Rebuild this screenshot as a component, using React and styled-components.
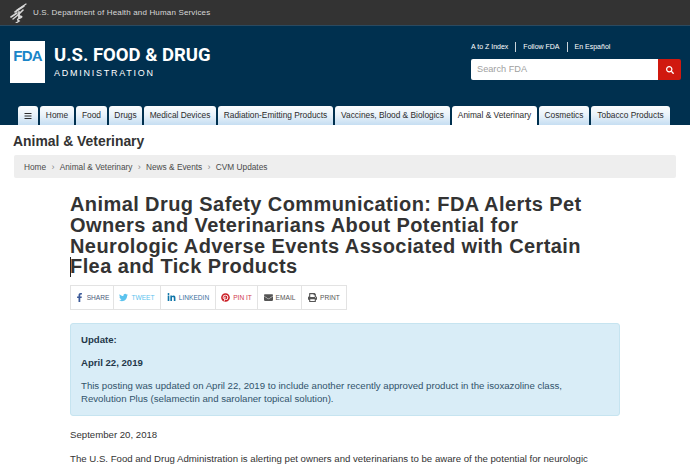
import React from "react";
import styled, { createGlobalStyle } from "styled-components";
import { FaFacebookF, FaTwitter, FaLinkedinIn, FaPinterest, FaEnvelope, FaPrint, FaBars, FaSearch } from "react-icons/fa";

const Global = createGlobalStyle`
  html, body { margin: 0; padding: 0; background: #fff; }
  body { width: 690px; height: 465px; overflow: hidden; font-family: "Liberation Sans", Arial, sans-serif; color: #333; }
  * { box-sizing: border-box; }
`;
const Page = styled.div`width: 690px; height: 465px; overflow: hidden;`;
const TopBar = styled.div`
  height: 26px; background: #333; border-bottom: 1px solid #2b4a60;
  display: flex; align-items: center; padding-left: 10px; gap: 6px;
`;
const TopText = styled.span`font-size: 8px; letter-spacing: 0.16px; color: #d8d8d8; padding-bottom: 1px;`;
const Masthead = styled.header`height: 99px; background: #00304f; display: flex; flex-direction: column;`;
const BrandRow = styled.div`height: 80px; padding: 15px 9px 0 10px; display: flex; justify-content: space-between;`;
const Brand = styled.div`display: flex; gap: 9px; align-items: flex-start;`;
const LogoBox = styled.div`
  width: 35px; height: 42px; background: #fff; display: flex; align-items: center; justify-content: center;
  padding-bottom: 13px; color: #1a85c8; font-size: 15px; font-weight: 700; letter-spacing: -0.8px;
`;
const BrandText = styled.div`display: flex; flex-direction: column; padding-top: 4px;`;
const BrandTitle = styled.div`font-family: Roboto, "Liberation Sans", sans-serif; font-size: 18.5px; line-height: 20px; font-weight: 700; color: #fff; letter-spacing: 0; white-space: nowrap;`;
const BrandSub = styled.div`font-size: 9px; line-height: 11px; margin-top: 3px; color: #fff; letter-spacing: 1.75px;`;
const Tools = styled.div`width: 210px; display: flex; flex-direction: column;`;
const ToolLinks = styled.div`display: flex; align-items: center; height: 10px; margin-top: 1px; font-size: 7px; color: #fff;`;
const ToolLink = styled.span`
  padding: 0 7px; border-left: 1px solid #c9d3da; line-height: 10px;
  &:first-child { border-left: 0; padding-left: 0; }
`;
const SearchBox = styled.div`display: flex; height: 21px; margin-top: 7px; border-radius: 2px; overflow: hidden;`;
const SearchField = styled.div`flex: 1; background: #fff; color: #a0a0a0; font-size: 9.2px; line-height: 21px; padding-left: 6px;`;
const SearchBtn = styled.div`width: 23px; background: #d0190f; display: flex; align-items: center; justify-content: center; color: #fff; font-size: 8px;`;
const Tabs = styled.nav`height: 19px; display: flex; gap: 2px; padding-left: 18px;`;
const Tab = styled.div`
  width: ${p => p.$w}px; height: 19px; border-radius: 3px 3px 0 0;
  background: ${p => p.$active ? "#fff" : "linear-gradient(#fbfdfe 0%, #eaf3fa 45%, #c6def2 100%)"};
  color: #2c2c2c; font-size: 8.35px; line-height: 19px; text-align: center; white-space: nowrap;
`;
const BarsTab = styled(Tab)`display: flex; align-items: center; justify-content: center; font-size: 8px;`;
const SectionTitle = styled.h2`margin: 8px 0 0 13px; font-size: 13.9px; line-height: 16px; font-weight: 700; color: #333;`;
const Crumbs = styled.div`
  margin: 6px 14px 0; height: 23px; background: #eee; border-radius: 2px; padding-left: 10px;
  display: flex; align-items: center; font-size: 8.3px; color: #4a4a4a;
`;
const Sep = styled.span`width: 13.5px; text-align: center; color: #888; font-size: 9px;`;
const Article = styled.main`margin: 0 70px; padding-top: 16px;`;
const Heading = styled.h1`
  position: relative; margin: 0; max-width: 530px; font-size: 20px; line-height: 20.8px; font-weight: 700; color: #333;
  letter-spacing: 0.41px;
`;
const Caret = styled.span`position: absolute; left: 0; bottom: 0; width: 1px; height: 20px; background: #222;`;
const Share = styled.div`display: inline-flex; margin-top: 8px; height: 25px; border: 1px solid #e3e3e3;`;
const ShareItem = styled.div`
  width: ${p => p.$w}px; display: flex; align-items: center; justify-content: center; gap: 3px; color: ${p => p.$c};
  font-size: 6.6px; border-left: 1px solid #e3e3e3;
  &:first-child { border-left: 0; }
  svg { font-size: ${p => p.$s || 9}px; color: ${p => p.$ic || p.$c}; }
`;
const Alert = styled.section`
  margin-top: 13px; height: 93px; background: #d9edf7; border: 1px solid #c6e4f0; border-radius: 3px;
  padding: 9px 10px 0; color: #31536b; font-size: 9.65px; line-height: 13px;
`;
const AlertHead = styled.div`font-size: 9.6px; font-weight: 700; color: #24384a; margin-bottom: 10px;`;
const AlertBody = styled.div``;
const Para = styled.p`margin: 12px 0 0; font-size: 9.65px; line-height: 13px; color: #333; white-space: nowrap;`;
const LastPara = styled(Para)`margin-top: 11px;`;

const Hhs = () => (
  <svg width="17" height="20" viewBox="0 0 17 20" fill="none" stroke="#d8d8d8" strokeLinecap="round">
    <path d="M1 14 L7 10" strokeWidth="1.6" />
    <path d="M3 16 L8 12" strokeWidth="1.4" />
    <path d="M5 9 L14 3" strokeWidth="1.6" />
    <path d="M7 7 L16 1" strokeWidth="1.3" />
    <path d="M8 12 L13 7" strokeWidth="1.6" />
    <path d="M9 13 C12 13 13 14 10 15 C7 16 7 17 9 18 L6 20" strokeWidth="1.4" />
    <path d="M9 9 L9 15" strokeWidth="1.8" />
  </svg>
);

const tabs = [["Home",34],["Food",31],["Drugs",33],["Medical Devices",72],["Radiation-Emitting Products",115],["Vaccines, Blood & Biologics",115],["Animal & Veterinary",85,true],["Cosmetics",50],["Tobacco Products",79]];

export default function App() {
  return (
    <Page>
      <Global />
      <TopBar><Hhs /><TopText>U.S. Department of Health and Human Services</TopText></TopBar>
      <Masthead>
        <BrandRow>
          <Brand>
            <LogoBox>FDA</LogoBox>
            <BrandText>
              <BrandTitle>U.S. FOOD &amp; DRUG</BrandTitle>
              <BrandSub>ADMINISTRATION</BrandSub>
            </BrandText>
          </Brand>
          <Tools>
            <ToolLinks>
              <ToolLink>A to Z Index</ToolLink>
              <ToolLink>Follow FDA</ToolLink>
              <ToolLink>En Español</ToolLink>
            </ToolLinks>
            <SearchBox>
              <SearchField>Search FDA</SearchField>
              <SearchBtn><FaSearch /></SearchBtn>
            </SearchBox>
          </Tools>
        </BrandRow>
        <Tabs>
          <BarsTab $w={20}><FaBars /></BarsTab>
          {tabs.map(([t, w, a]) => <Tab key={t} $w={w} $active={a}>{t}</Tab>)}
        </Tabs>
      </Masthead>
      <SectionTitle>Animal &amp; Veterinary</SectionTitle>
      <Crumbs>
        Home<Sep>›</Sep>Animal &amp; Veterinary<Sep>›</Sep>News &amp; Events<Sep>›</Sep>CVM Updates
      </Crumbs>
      <Article>
        <Heading>
          Animal Drug Safety Communication: FDA Alerts Pet Owners and Veterinarians About Potential for Neurologic Adverse Events Associated with Certain Flea and Tick Products
          <Caret />
        </Heading>
        <Share>
          <ShareItem $w={42} $c="#4a5a7a" $ic="#3b5998"><FaFacebookF />SHARE</ShareItem>
          <ShareItem $w={47} $c="#5cc3ee"><FaTwitter />TWEET</ShareItem>
          <ShareItem $w={55} $c="#3a6f9c" $ic="#0f75a8"><FaLinkedinIn />LINKEDIN</ShareItem>
          <ShareItem $w={42} $c="#d0394c" $ic="#cb2027"><FaPinterest />PIN IT</ShareItem>
          <ShareItem $w={44} $c="#555"><FaEnvelope />EMAIL</ShareItem>
          <ShareItem $w={45} $c="#555"><FaPrint />PRINT</ShareItem>
        </Share>
        <Alert>
          <AlertHead>Update:</AlertHead>
          <AlertHead>April 22, 2019</AlertHead>
          <AlertBody>This posting was updated on April 22, 2019 to include another recently approved product in the isoxazoline class, Revolution Plus (selamectin and sarolaner topical solution).</AlertBody>
        </Alert>
        <Para>September 20, 2018</Para>
        <LastPara>The U.S. Food and Drug Administration is alerting pet owners and veterinarians to be aware of the potential for neurologic</LastPara>
      </Article>
    </Page>
  );
}
